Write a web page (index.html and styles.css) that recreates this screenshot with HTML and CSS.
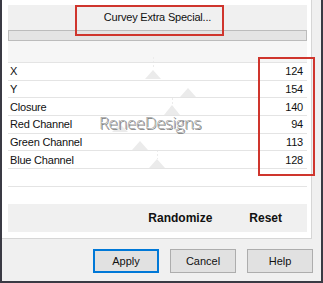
FILE: index.html
```html
<!DOCTYPE html>
<html lang="en">
<head>
    <meta charset="UTF-8">
    <title>Curvey Extra Special</title>
    <link rel="stylesheet" href="styles.css">
</head>
<body>
    <div id="window">
        <div id="panel">
            <div class="head">
                <div class="title">Curvey Extra Special...</div>
                <div class="bar"></div>
            </div>
            <div class="subhead"></div>
            <svg class="curve" width="310" height="239" viewBox="0 0 310 239">
                <g fill="#ebebeb">
                    <polygon points="151,70 143,79 159,79"/>
                    <polygon points="186,88 178,97 194,97"/>
                    <polygon points="170,105 162,115 178,115"/>
                    <polygon points="118,124 110,132 126,132"/>
                    <polygon points="138,141 130,150 146,150"/>
                    <polygon points="155,159 147,168 163,168"/>
                </g>
                <g stroke="#ececec" stroke-width="1" stroke-dasharray="2 2">
                    <line x1="151.5" y1="57" x2="151.5" y2="69"/>
                    <line x1="155.5" y1="150" x2="155.5" y2="159"/>
                    <line x1="170.5" y1="98" x2="170.5" y2="105"/>
                </g>
            </svg>
            <div class="list">
                <div class="row"><span>X</span><span>124</span></div>
                <div class="row"><span>Y</span><span>154</span></div>
                <div class="row"><span>Closure</span><span>140</span></div>
                <div class="row"><span>Red Channel</span><span>94</span></div>
                <div class="row"><span>Green Channel</span><span>113</span></div>
                <div class="row"><span>Blue Channel</span><span>128</span></div>
                <div class="row"></div>
                <div class="row row-last"></div>
            </div>
            <div class="mark">ReneeDesigns</div>
            <div class="actions">
                <span>Randomize</span>
                <span>Reset</span>
            </div>
        </div>
        <div class="buttons">
            <div class="btn btn-default">Apply</div>
            <div class="btn">Cancel</div>
            <div class="btn">Help</div>
        </div>
        <div class="note note-title"></div>
        <div class="note note-values"></div>
    </div>
</body>
</html>
```

FILE: styles.css
```css
*{
    box-sizing: border-box;
}
body{
    margin: 0;
    background: #f0f0f0;
    font-family: "Liberation Sans", Arial, sans-serif;
    font-size: 11px;
    color: #111;
}
#window{
    position: relative;
    width: 323px;
    height: 283px;
    border: 2px solid #3a3a44;
    border-top: 0;
    background: #f0f0f0;
}
#panel{
    position: relative;
    width: 310px;
    height: 239px;
    padding: 5px 4px 0 6px;
    background: #fff;
    border-right: 1px solid #d6d6d6;
    border-bottom: 1px solid #d6d6d6;
}
.head{
    background: #f0f0f0;
}
.title{
    height: 25px;
    line-height: 25px;
    text-align: center;
    letter-spacing: -0.2px;
}
.bar{
    height: 11px;
    background: #e4e4e4;
    border: 1px solid #bcbcbc;
}
.subhead{
    height: 21px;
    background: #f6f6f6;
}
.curve{
    position: absolute;
    top: 0;
    left: 0;
}
.list{
    position: relative;
    border-top: 1px solid #e4e4e4;
}
.row{
    display: flex;
    justify-content: space-between;
    align-items: center;
    height: 17.67px;
    padding: 0 4px 0 2px;
    border-bottom: 1px solid #e4e4e4;
    letter-spacing: -0.2px;
}
.row-last{
    height: 17.33px;
    border-bottom: 0;
}
.mark{
    position: absolute;
    left: 97px;
    top: 111px;
    font-family: "Open Sans", sans-serif;
    font-weight: 300;
    font-size: 17px;
    letter-spacing: -0.5px;
    color: #a8a8a8;
    text-shadow: -1px -1px 0 #fff, 1px 1px 0 #7a7a7a;
}
.actions{
    display: flex;
    justify-content: flex-end;
    align-items: center;
    gap: 37px;
    height: 28px;
    padding-right: 25px;
    background: #f0f0f0;
    font-weight: bold;
    font-size: 12px;
}
.buttons{
    display: flex;
    justify-content: flex-end;
    gap: 11px;
    padding: 10px 8px 0 0;
}
.btn{
    width: 66px;
    height: 24px;
    line-height: 22px;
    text-align: center;
    background: #e1e1e1;
    border: 1px solid #adadad;
}
.btn-default{
    line-height: 20px;
    border: 2px solid #0078d7;
}
.note{
    position: absolute;
    border: 2px solid #cf352d;
}
.note-title{
    left: 73px;
    top: 5px;
    width: 149px;
    height: 31px;
}
.note-values{
    left: 256px;
    top: 57px;
    width: 57px;
    height: 119px;
}
```
